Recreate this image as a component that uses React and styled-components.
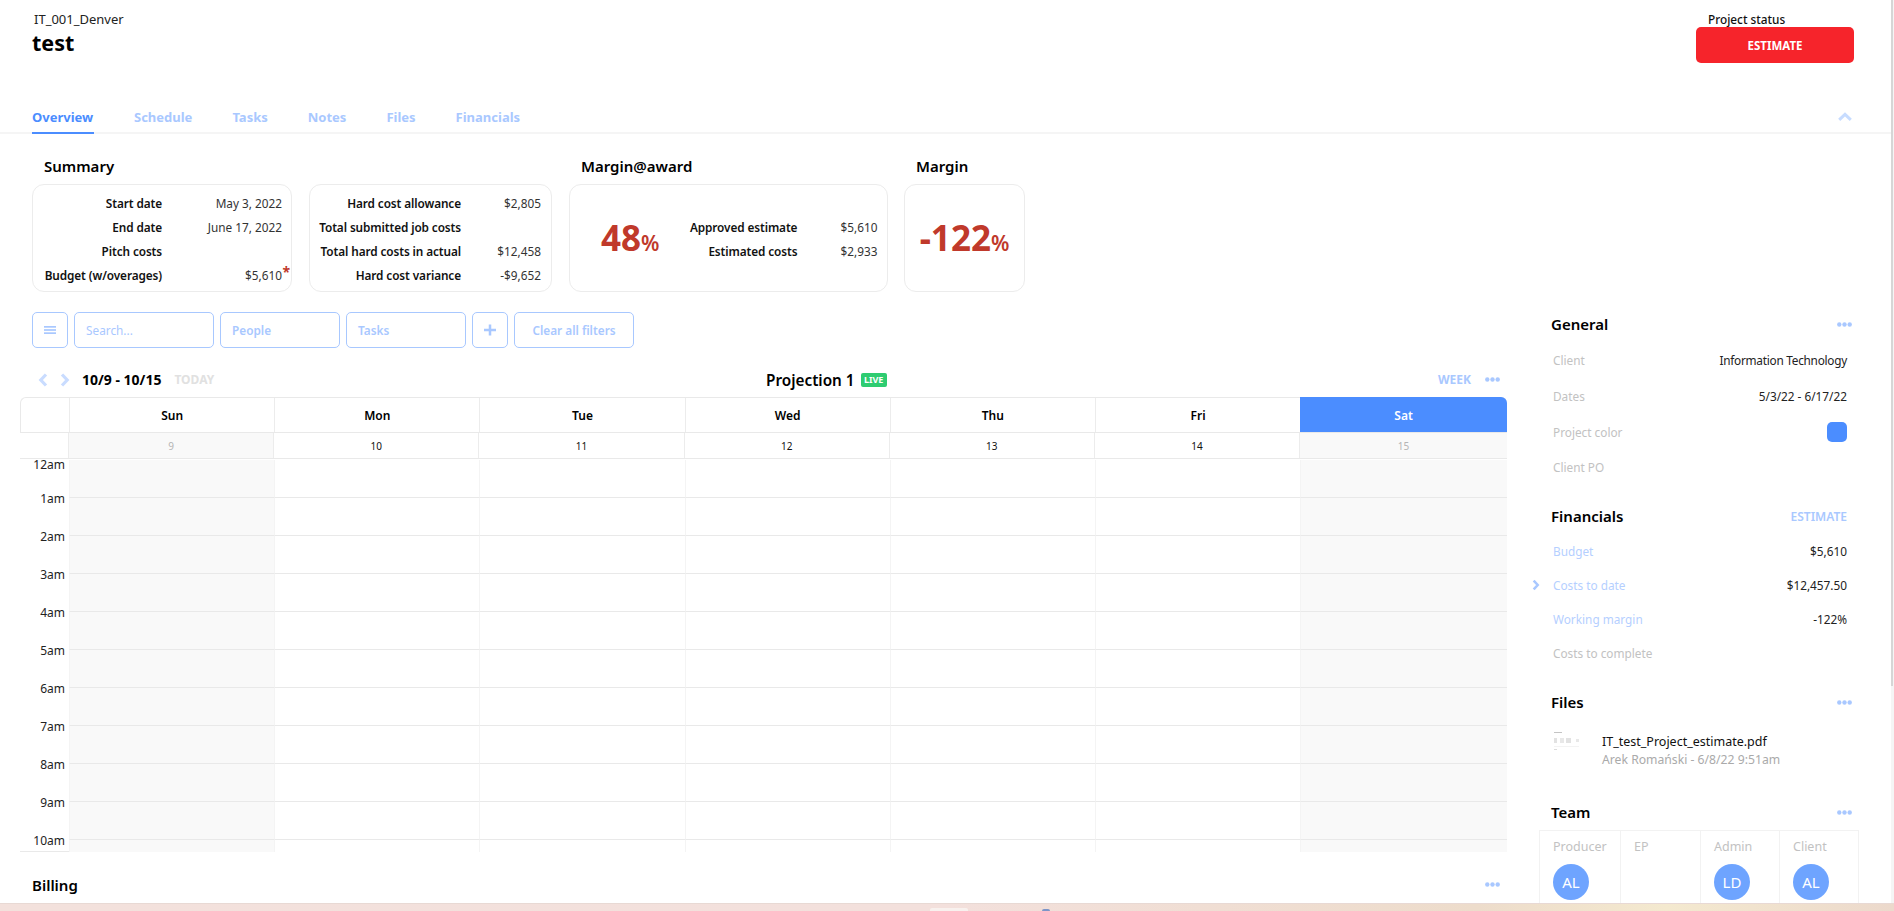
import React from "react";
import styled, { createGlobalStyle } from "styled-components";

const Global = createGlobalStyle`
  html, body { margin: 0; padding: 0; height: 100%; overflow: hidden; background: #fff; }
  body { font-family: "Noto Sans", "Open Sans", Arial, sans-serif; color: #000; font-size: 12px; }
  * { box-sizing: border-box; }
`;

const Viewport = styled.div`
  width: 1894px; height: 911px; display: flex; flex-direction: column; overflow: hidden;
`;
const Frame = styled.div`
  height: 903px; flex: none; display: flex; overflow: hidden; background: #fff;
`;
const Page = styled.div`
  flex: 1; min-width: 0; display: flex; flex-direction: column;
`;
const ScrollTrack = styled.div`
  width: 3px; flex: none; background: #f5f5f5;
  &::before { content: ""; display: block; width: 2px; height: 686px; background: #d6d6d6; }
`;
const Wallpaper = styled.div`
  height: 8px; flex: none; border-top: 1px solid #e8d9d4; position: relative;
  background: linear-gradient(90deg, #f3e1dc 0%, #f3e0dc 50%, #eddccb 78%, #f4e9cf 88%, #ecd9cc 100%);
`;
const TaskIcon = styled.span`
  position: absolute; top: ${p => p.$top}px; left: ${p => p.$left}px; width: ${p => p.$w}px; height: 4px;
  background: ${p => p.$c}; border-radius: 2px 2px 0 0;
`;

const Header = styled.header`
  height: 101px; flex: none; padding: 0 37px 0 32px; display: flex; justify-content: space-between;
`;
const TitleBlock = styled.div`
  padding-top: 11px;
`;
const Code = styled.div`
  font-size: 13px; line-height: 17px; color: #222; padding-left: 2px;
`;
const Title = styled.h1`
  margin: 0; font-size: 21.5px; line-height: 30px; font-weight: 700;
`;
const StatusBlock = styled.div`
  width: 158px; padding-top: 12px;
`;
const StatusLabel = styled.div`
  font-size: 11.8px; font-weight: 500; line-height: 15px; padding-left: 12px; color: #111;
`;
const StatusButton = styled.div`
  height: 36px; background: #f6242b; color: #fff; border-radius: 5px; font-size: 11.5px; font-weight: 700;
  display: flex; align-items: center; justify-content: center;
`;

const TabBar = styled.nav`
  height: 33px; flex: none; padding: 0 39px 0 32px; display: flex; align-items: stretch; gap: 40px;
  border-bottom: 2px solid #f5f5f5;
`;
const Tab = styled.a`
  font-size: 13px; font-weight: 700; line-height: 32px; height: 33px; color: ${p => p.$active ? "#4b8dff" : "#a9c8ff"};
  border-bottom: 2px solid ${p => p.$active ? "#4b8dff" : "transparent"};
  min-width: ${p => p.$active ? "62px" : "0"};
`;
const Collapse = styled.svg`
  margin-left: auto; align-self: center; width: 14px; height: 9px; margin-bottom: 1px; flex: none;
`;

const Body = styled.div`
  flex: 1; min-height: 0; display: flex;
`;
const Main = styled.main`
  width: 1507px; flex: none; display: flex; flex-direction: column;
`;

const Summary = styled.section`
  flex: none; padding: 22px 0 0 32px; display: flex; gap: 17px;
`;
const SummaryGroup = styled.div`
  display: flex; flex-direction: column; margin-left: ${p => p.$shift || 0}px;
`;
const SectionTitle = styled.h2`
  margin: 0; height: 28px; padding-left: 12px; font-size: 15px; line-height: 21px; font-weight: 600;
  white-space: nowrap;
`;
const Cards = styled.div`
  display: flex; gap: 17px;
`;
const Card = styled.div`
  width: ${p => p.$w}px; height: 108px; padding-top: 1px; border: 1px solid #ececec; border-radius: 12px;
  display: flex; align-items: center; justify-content: ${p => p.$center ? "center" : "flex-start"};
`;
const KVGrid = styled.div`
  display: grid; grid-template-columns: ${p => p.$label}px ${p => p.$value}px; grid-auto-rows: 24px; align-items: center;
  margin-left: ${p => p.$left || 0}px;
`;
const KLabel = styled.div`
  font-size: 11.8px; font-weight: 600; letter-spacing: -0.1px; text-align: right; white-space: nowrap; color: #111;
`;
const KValue = styled.div`
  font-size: 11.8px; text-align: right; color: #333; white-space: nowrap; position: relative;
`;
const Asterisk = styled.span`
  position: absolute; right: -8px; top: -2px; color: #c0392b; font-size: 14px; font-weight: 700; line-height: 14px;
`;
const BigPct = styled.div`
  color: #c0392b; font-weight: 700; font-size: 35px; line-height: 40px; white-space: nowrap; margin-top: 4px;
  margin-left: ${p => p.$left || 0}px;
  small { font-size: 21px; font-weight: 600; }
`;

const Filters = styled.div`
  flex: none; margin: 20px 0 0 32px; display: flex; gap: 6px; height: 36px;
`;
const FilterBox = styled.div`
  width: ${p => p.$w}px; height: 36px; border: 1px solid #a8c8ff; border-radius: 5px; color: #a9c8ff;
  font-size: 11.8px; font-weight: ${p => p.$light ? 400 : 600}; padding-left: ${p => p.$center ? 0 : 11}px;
  display: flex; align-items: center; justify-content: ${p => p.$center ? "center" : "flex-start"};
`;

const CalBar = styled.div`
  flex: none; margin-top: 19px; height: 25px; padding: 0 7px 0 38px; display: grid; grid-template-columns: 728px auto 1fr; align-items: center;
`;
const CalLeft = styled.div`
  display: flex; align-items: center; gap: 12px; color: #c9dcff;
`;
const Range = styled.span`
  font-size: 14px; font-weight: 700; color: #000; white-space: nowrap;
`;
const Today = styled.span`
  font-size: 12px; font-weight: 700; color: #e1e1e1; margin-left: 1px;
`;
const CalTitle = styled.div`
  display: flex; align-items: center; gap: 6px; font-size: 15.3px; font-weight: 600;
`;
const Live = styled.span`
  background: #2ecc71; color: #fff; font-size: 9px; font-weight: 700; border-radius: 2px;
  width: 26px; height: 14px; display: flex; align-items: center; justify-content: center;
`;
const CalRight = styled.div`
  display: flex; align-items: center; justify-content: flex-end; gap: 14px;
  color: #a9c8ff; font-size: 12px; font-weight: 700;
`;

const Calendar = styled.div`
  margin: 5px 0 0 20px; height: 455px; flex: none; overflow: hidden; display: flex; flex-direction: column;
`;
const DayRow = styled.div`
  display: grid; grid-template-columns: 48px repeat(6, 205.2px) 1fr; height: ${p => p.$h}px; flex: none;
  border-bottom: 1px solid #e9e9e9;
`;
const HeadRow = styled(DayRow)`
  border-top: 1px solid #e9e9e9; border-left: 1px solid #e9e9e9;
  border-top-left-radius: 6px; border-top-right-radius: 6px;
`;
const DayName = styled.div`
  font-size: 12px; font-weight: 600; padding-top: 1px; display: flex; align-items: center; justify-content: center;
  border-left: 1px solid #ececec;
  ${p => p.$active ? "background:#4b8dff;color:#fff;border-top-right-radius:6px;margin-top:-1px;border-left:0;padding-top:2px;" : ""}
`;
const DayNum = styled.div`
  font-size: 10px; display: flex; align-items: center; justify-content: center; border-left: 1px solid #ececec;
  color: ${p => p.$off ? "#b5b5b5" : "#111"}; background: ${p => p.$off ? "#f9f9f9" : "#fff"};
`;
const Grid = styled.div`
  flex: 1; min-height: 0; display: grid; grid-template-columns: 49px 1fr; overflow: hidden;
`;
const TimeCol = styled.div`
  display: flex; flex-direction: column; align-items: flex-end; padding-right: 4px; border-bottom: 1px solid #e9e9e9; height: 393px;
`;
const TimeLabel = styled.div`
  height: ${p => p.$first ? 34 : 38}px; font-size: 12px; line-height: 11px; color: #222; flex: none;
`;
const Cells = styled.div`
  display: grid; grid-template-columns: repeat(6, 205.2px) 1fr; grid-auto-rows: 38px; padding-top: 1px;
`;
const Cell = styled.div`
  border-left: 1px solid #f4f4f4; border-bottom: 1px solid #e9e9e9; background: ${p => p.$off ? "#f9f9f9" : "#fff"};
`;

const Billing = styled.div`
  flex: none; margin-top: 22px; padding: 0 7px 0 32px; display: flex; align-items: center; justify-content: space-between;
  font-size: 15px; font-weight: 600; height: 21px;
`;

const Side = styled.aside`
  flex: 1; min-width: 0; padding: 0 44px; overflow: hidden;
`;
const SideHead = styled.div`
  display: flex; align-items: center; justify-content: space-between; height: 22px; margin-top: ${p => p.$top}px;
  h3 { margin: 0; font-size: 15px; font-weight: 600; }
  svg { margin-right: -5px; }
`;
const Estimate = styled.span`
  color: #a9c8ff; font-size: 12px; font-weight: 600;
`;
const RowGroup = styled.div`
  margin-top: ${p => p.$top}px;
`;
const SideRow = styled.div`
  display: flex; align-items: center; justify-content: space-between; height: ${p => p.$h}px; position: relative;
  font-size: 11.8px; padding-left: 2px; color: #222;
`;
const SideLabel = styled.span`
  color: ${p => p.$link ? "#b5cfff" : "#c2c2c2"}; font-weight: 400;
`;
const TightValue = styled.span`
  letter-spacing: -0.25px;
`;
const Pointer = styled.span`
  position: absolute; left: -19px; top: 50%; transform: translateY(-50%); color: #a9c8ff; display: flex;
`;
const Swatch = styled.span`
  width: 20px; height: 20px; border-radius: 5px; background: #4b8dff;
`;
const FileRow = styled.div`
  display: flex; margin-top: 20px; gap: 22px; padding-left: 2px;
`;
const FileThumb = styled.svg`
  width: 27px; height: 19px; flex: none; margin-top: -1px;
`;
const FileName = styled.div`
  font-size: 12.5px; line-height: 18px; color: #111;
`;
const FileMeta = styled.div`
  font-size: 12.2px; line-height: 18px; color: #aaa;
`;
const TeamTable = styled.div`
  margin: 7px 0 0 -12px; width: 320px; display: grid; grid-template-columns: 80px 80px 79px 81px;
  border: 1px solid #f2f2f2; border-bottom: 0; height: 73px;
`;
const TeamCell = styled.div`
  border-left: ${p => p.$first ? "0" : "1px solid #f2f2f2"}; padding: 7px 0 0 13px; color: #c2c2c2; font-size: 12.5px; line-height: 18px;
`;
const Avatar = styled.div`
  width: 36px; height: 36px; border-radius: 50%; background: #6ea4ff; color: #fff; font-size: 15px;
  display: flex; align-items: center; justify-content: center; margin-top: 8px;
`;
const Dots = styled.svg`
  width: 15px; height: 5px; display: block; flex: none;
`;

const DotsIcon = () => (
  <Dots viewBox="0 0 15 5">
    <circle cx="2.3" cy="2.5" r="2.2" fill="#a9c8ff" />
    <circle cx="7.5" cy="2.5" r="2.2" fill="#a9c8ff" />
    <circle cx="12.7" cy="2.5" r="2.2" fill="#a9c8ff" />
  </Dots>
);
const Chevron = ({ dir, w = 10, h = 14 }) => (
  <svg width={w} height={h} viewBox="0 0 10 14" fill="none" stroke="currentColor" strokeWidth="3.2">
    <path d={dir === "left" ? "M8 1.5 L2.8 7 L8 12.5" : "M2 1.5 L7.2 7 L2 12.5"} />
  </svg>
);
const NavPair = styled.span`
  display: flex; gap: 12px; flex: none;
`;

const days = ["Sun", "Mon", "Tue", "Wed", "Thu", "Fri", "Sat"];
const nums = [9, 10, 11, 12, 13, 14, 15];
const hours = ["12am", "1am", "2am", "3am", "4am", "5am", "6am", "7am", "8am", "9am", "10am"];

export default function App() {
  return (
    <Viewport>
      <Global />
      <Frame>
        <Page>
          <Header>
            <TitleBlock>
              <Code>IT_001_Denver</Code>
              <Title>test</Title>
            </TitleBlock>
            <StatusBlock>
              <StatusLabel>Project status</StatusLabel>
              <StatusButton>ESTIMATE</StatusButton>
            </StatusBlock>
          </Header>
          <TabBar>
            <Tab $active>Overview</Tab>
            <Tab>Schedule</Tab>
            <Tab>Tasks</Tab>
            <Tab>Notes</Tab>
            <Tab>Files</Tab>
            <Tab>Financials</Tab>
            <Collapse viewBox="0 0 14 9" fill="none" stroke="#c7dcff" strokeWidth="3">
              <path d="M1.2 7.8 L7 2.3 L12.8 7.8" />
            </Collapse>
          </TabBar>
          <Body>
            <Main>
              <Summary>
                <SummaryGroup>
                  <SectionTitle>Summary</SectionTitle>
                  <Cards>
                    <Card $w={260}>
                      <KVGrid $label={129} $value={120}>
                        <KLabel>Start date</KLabel><KValue>May 3, 2022</KValue>
                        <KLabel>End date</KLabel><KValue>June 17, 2022</KValue>
                        <KLabel>Pitch costs</KLabel><KValue />
                        <KLabel>Budget (w/overages)</KLabel><KValue>$5,610<Asterisk>*</Asterisk></KValue>
                      </KVGrid>
                    </Card>
                    <Card $w={243}>
                      <KVGrid $label={151} $value={80}>
                        <KLabel>Hard cost allowance</KLabel><KValue>$2,805</KValue>
                        <KLabel>Total submitted job costs</KLabel><KValue />
                        <KLabel>Total hard costs in actual</KLabel><KValue>$12,458</KValue>
                        <KLabel>Hard cost variance</KLabel><KValue>-$9,652</KValue>
                      </KVGrid>
                    </Card>
                  </Cards>
                </SummaryGroup>
                <SummaryGroup>
                  <SectionTitle>Margin@award</SectionTitle>
                  <Card $w={319}>
                    <BigPct $left={31}>48<small>%</small></BigPct>
                    <KVGrid $label={139} $value={80} $left={-1}>
                      <KLabel>Approved estimate</KLabel><KValue>$5,610</KValue>
                      <KLabel>Estimated costs</KLabel><KValue>$2,933</KValue>
                    </KVGrid>
                  </Card>
                </SummaryGroup>
                <SummaryGroup $shift={-1}>
                  <SectionTitle>Margin</SectionTitle>
                  <Card $w={121} $center>
                    <BigPct>-122<small>%</small></BigPct>
                  </Card>
                </SummaryGroup>
              </Summary>

              <Filters>
                <FilterBox $w={36} $center>
                  <svg width="12" height="8" viewBox="0 0 12 8" fill="#a9c8ff">
                    <rect x="0" y="0" width="12" height="1.7" />
                    <rect x="0" y="3.15" width="12" height="1.7" />
                    <rect x="0" y="6.3" width="12" height="1.7" />
                  </svg>
                </FilterBox>
                <FilterBox $w={140} $light>Search...</FilterBox>
                <FilterBox $w={120}>People</FilterBox>
                <FilterBox $w={120}>Tasks</FilterBox>
                <FilterBox $w={36} $center>
                  <svg width="12" height="12" viewBox="0 0 12 12" fill="#a9c8ff">
                    <rect x="4.75" y="0.5" width="2.5" height="11" />
                    <rect x="0" y="4.75" width="12" height="2.5" />
                  </svg>
                </FilterBox>
                <FilterBox $w={120} $center>Clear all filters</FilterBox>
              </Filters>

              <CalBar>
                <CalLeft>
                  <NavPair>
                    <Chevron dir="left" />
                    <Chevron dir="right" />
                  </NavPair>
                  <Range>10/9 - 10/15</Range>
                  <Today>TODAY</Today>
                </CalLeft>
                <CalTitle>Projection 1 <Live>LIVE</Live></CalTitle>
                <CalRight>WEEK <DotsIcon /></CalRight>
              </CalBar>

              <Calendar>
                <HeadRow $h={36}>
                  <div />
                  {days.map((d, i) => <DayName key={d} $active={i === 6}>{d}</DayName>)}
                </HeadRow>
                <DayRow $h={26}>
                  <div />
                  {nums.map((n, i) => <DayNum key={n} $off={i === 0 || i === 6}>{n}</DayNum>)}
                </DayRow>
                <Grid>
                  <TimeCol>
                    {hours.map((h, i) => <TimeLabel key={h} $first={i === 0}>{h}</TimeLabel>)}
                  </TimeCol>
                  <Cells>
                    {Array.from({ length: 77 }, (_, i) => <Cell key={i} $off={i % 7 === 0 || i % 7 === 6} />)}
                  </Cells>
                </Grid>
              </Calendar>

              <Billing>Billing <DotsIcon /></Billing>
            </Main>

            <Side>
              <SideHead $top={179}><h3>General</h3><DotsIcon /></SideHead>
              <RowGroup $top={7}>
                <SideRow $h={36}><SideLabel>Client</SideLabel><TightValue>Information Technology</TightValue></SideRow>
                <SideRow $h={36}><SideLabel>Dates</SideLabel>5/3/22 - 6/17/22</SideRow>
                <SideRow $h={36}><SideLabel>Project color</SideLabel><Swatch /></SideRow>
                <SideRow $h={34}><SideLabel>Client PO</SideLabel></SideRow>
              </RowGroup>

              <SideHead $top={21}><h3>Financials</h3><Estimate>ESTIMATE</Estimate></SideHead>
              <RowGroup $top={7}>
                <SideRow $h={34}><SideLabel $link>Budget</SideLabel>$5,610</SideRow>
                <SideRow $h={34}>
                  <Pointer><Chevron dir="right" w={8} h={11} /></Pointer>
                  <SideLabel $link>Costs to date</SideLabel>$12,457.50
                </SideRow>
                <SideRow $h={34}><SideLabel $link>Working margin</SideLabel>-122%</SideRow>
                <SideRow $h={34}><SideLabel>Costs to complete</SideLabel></SideRow>
              </RowGroup>

              <SideHead $top={21}><h3>Files</h3><DotsIcon /></SideHead>
              <FileRow>
                <FileThumb viewBox="0 0 27 19">
                  <rect x="1" y="0" width="8" height="1" fill="#c4c4c4" />
                  <rect x="1" y="6" width="3" height="5" fill="#e2e2e2" />
                  <rect x="7" y="6" width="4" height="5" fill="#e8e8e8" />
                  <rect x="13" y="6" width="5" height="5" fill="#e2e2e2" />
                  <rect x="23" y="7" width="3" height="3" fill="#e8e8e8" />
                  <rect x="1" y="14" width="25" height="1" fill="#f3f3f3" />
                  <rect x="1" y="17" width="3" height="1" fill="#dcdcdc" />
                </FileThumb>
                <div>
                  <FileName>IT_test_Project_estimate.pdf</FileName>
                  <FileMeta>Arek Romański - 6/8/22 9:51am</FileMeta>
                </div>
              </FileRow>
              <SideHead $top={32}><h3>Team</h3><DotsIcon /></SideHead>
              <TeamTable>
                <TeamCell $first>Producer<Avatar>AL</Avatar></TeamCell>
                <TeamCell>EP</TeamCell>
                <TeamCell>Admin<Avatar>LD</Avatar></TeamCell>
                <TeamCell>Client<Avatar>AL</Avatar></TeamCell>
              </TeamTable>
            </Side>
          </Body>
        </Page>
        <ScrollTrack />
      </Frame>
      <Wallpaper>
        <TaskIcon $top={4} $left={930} $w={38} $c="#f8f1ee" />
        <TaskIcon $top={5} $left={1042} $w={8} $c="#7d95c8" />
      </Wallpaper>
    </Viewport>
  );
}
